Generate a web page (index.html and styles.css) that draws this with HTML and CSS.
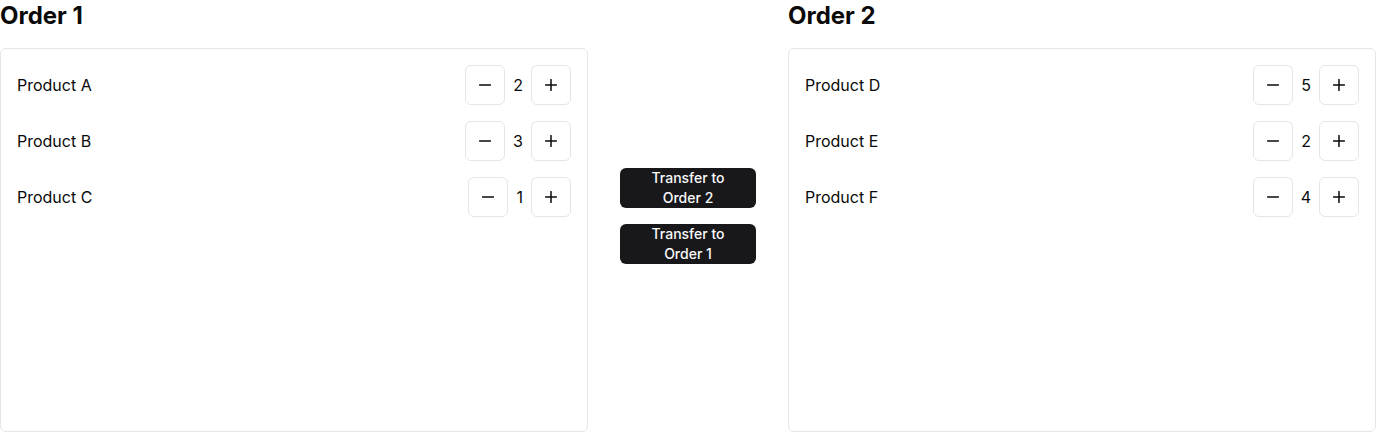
FILE: index.html
```html
<!DOCTYPE html>
<html>
<head>
<meta charset="utf-8">
<link rel="stylesheet" href="styles.css">
</head>
<body>
<div class="page">
  <section class="order">
    <h2 class="title">Order 1</h2>
    <div class="card">
      <div class="row"><span class="name">Product A</span><div class="qty"><button class="step" aria-label="decrease"><svg class="ico" viewBox="0 0 12 12"><path d="M0.5 6h11"/></svg></button><span class="count">2</span><button class="step" aria-label="increase"><svg class="ico" viewBox="0 0 12 12"><path d="M0.5 6h11M6 0.5v11"/></svg></button></div></div>
      <div class="row"><span class="name">Product B</span><div class="qty"><button class="step" aria-label="decrease"><svg class="ico" viewBox="0 0 12 12"><path d="M0.5 6h11"/></svg></button><span class="count">3</span><button class="step" aria-label="increase"><svg class="ico" viewBox="0 0 12 12"><path d="M0.5 6h11M6 0.5v11"/></svg></button></div></div>
      <div class="row"><span class="name">Product C</span><div class="qty"><button class="step" aria-label="decrease"><svg class="ico" viewBox="0 0 12 12"><path d="M0.5 6h11"/></svg></button><span class="count">1</span><button class="step" aria-label="increase"><svg class="ico" viewBox="0 0 12 12"><path d="M0.5 6h11M6 0.5v11"/></svg></button></div></div>
    </div>
  </section>
  <div class="middle">
    <button class="transfer">Transfer to Order 2</button>
    <button class="transfer">Transfer to Order 1</button>
  </div>
  <section class="order">
    <h2 class="title">Order 2</h2>
    <div class="card">
      <div class="row"><span class="name">Product D</span><div class="qty"><button class="step" aria-label="decrease"><svg class="ico" viewBox="0 0 12 12"><path d="M0.5 6h11"/></svg></button><span class="count">5</span><button class="step" aria-label="increase"><svg class="ico" viewBox="0 0 12 12"><path d="M0.5 6h11M6 0.5v11"/></svg></button></div></div>
      <div class="row"><span class="name">Product E</span><div class="qty"><button class="step" aria-label="decrease"><svg class="ico" viewBox="0 0 12 12"><path d="M0.5 6h11"/></svg></button><span class="count">2</span><button class="step" aria-label="increase"><svg class="ico" viewBox="0 0 12 12"><path d="M0.5 6h11M6 0.5v11"/></svg></button></div></div>
      <div class="row"><span class="name">Product F</span><div class="qty"><button class="step" aria-label="decrease"><svg class="ico" viewBox="0 0 12 12"><path d="M0.5 6h11"/></svg></button><span class="count">4</span><button class="step" aria-label="increase"><svg class="ico" viewBox="0 0 12 12"><path d="M0.5 6h11M6 0.5v11"/></svg></button></div></div>
    </div>
  </section>
</div>
</body>
</html>
```
FILE: styles.css
```css
* { box-sizing: border-box; }
html, body { margin: 0; padding: 0; background: #fff; }
body { font-family: Inter, "Noto Sans", sans-serif; color: #0a0a0a; }
.page { display: flex; align-items: center; width: 1376px; height: 432px; }
.order { flex: 1; display: flex; flex-direction: column; }
.title { margin: 0 0 16px 0; font-size: 24px; line-height: 32px; font-weight: 700; color: #0a0a0a; }
.card { height: 384px; border: 1px solid #e5e5e5; border-radius: 6px; padding: 16px; display: flex; flex-direction: column; gap: 16px; }
.row { display: flex; align-items: center; justify-content: space-between; height: 40px; }
.name { font-size: 16px; line-height: 24px; }
.qty { display: flex; align-items: center; gap: 8px; }
.step { width: 40px; height: 40px; border: 1px solid #e5e5e5; border-radius: 6px; background: #fff; padding: 0; display: flex; align-items: center; justify-content: center; }
.ico { width: 12px; height: 12px; fill: none; stroke: #0a0a0a; stroke-width: 1.5; stroke-linecap: round; }
.count { font-size: 16px; line-height: 24px; }
.middle { width: 200px; padding: 0 32px; display: flex; flex-direction: column; gap: 16px; }
.transfer { width: 136px; height: 40px; padding: 0 16px; border: none; border-radius: 6px; background: #18181b; color: #fafafa; font-family: Inter, sans-serif; font-size: 14px; line-height: 20px; font-weight: 500; }
```
